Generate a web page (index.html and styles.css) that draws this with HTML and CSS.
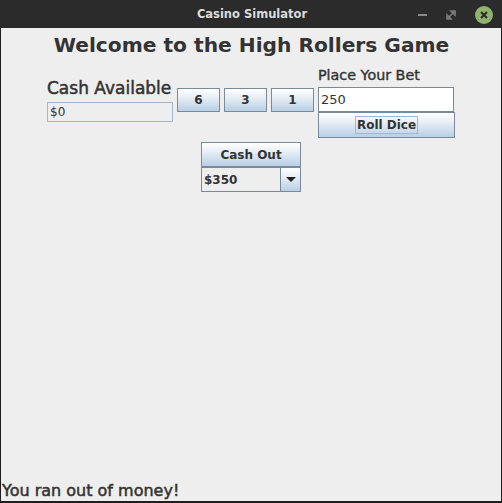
FILE: index.html
```html
<!DOCTYPE html>
<html>
<head>
<meta charset="utf-8">
<link rel="stylesheet" href="styles.css">
</head>
<body>
<div class="window">
  <div class="titlebar">
    <span class="title">Casino Simulator</span>
    <div class="controls">
      <span class="ctl min"></span>
      <svg class="ctl max" width="10" height="10" viewBox="0 0 10 10"><path d="M5 1h4v4z M1 5v4h4z M3 7l4-4" fill="#7a7a7a" stroke="#7a7a7a" stroke-width="1.6"/></svg>
      <svg class="ctl close" width="18" height="18" viewBox="0 0 18 18"><circle cx="9" cy="9" r="9" fill="#8fb26c"/><path d="M6 6l6 6M12 6l-6 6" stroke="#2a2a2a" stroke-width="2"/></svg>
    </div>
  </div>
  <div class="content">
    <h1 class="heading">Welcome to the High Rollers Game</h1>
    <div class="row">
      <div class="cash-col">
        <div class="label">Cash Available</div>
        <div class="field readonly">$0</div>
      </div>
      <div class="dice">
        <div class="btn die">6</div>
        <div class="btn die">3</div>
        <div class="btn die">1</div>
      </div>
      <div class="bet-col">
        <div class="label small">Place Your Bet</div>
        <div class="field input">250</div>
        <div class="btn roll"><span class="focus">Roll Dice</span></div>
      </div>
    </div>
    <div class="cashout">
      <div class="btn out">Cash Out</div>
      <div class="combo">
        <div class="combo-val">$350</div>
        <div class="combo-arrow"><svg width="10" height="6" viewBox="0 0 10 6"><path d="M0 0h10L5 5z" fill="#222"/></svg></div>
      </div>
    </div>
    <div class="spacer"></div>
    <div class="status">You ran out of money!</div>
  </div>
</div>
</body>
</html>
```

FILE: styles.css
```css
html, body {
  margin: 0;
  padding: 0;
  background: #1e1e1e;
}
.window {
  width: 502px;
  height: 503px;
  display: flex;
  flex-direction: column;
  font-family: "DejaVu Sans", sans-serif;
}
.titlebar {
  height: 28px;
  background: #2b2b2b;
  position: relative;
  display: flex;
  align-items: center;
  justify-content: center;
  flex: none;
}
.title {
  color: #dcdcdc;
  font-weight: bold;
  font-size: 11.5px;
  margin-left: 2px;
}
.controls {
  position: absolute;
  right: 9px;
  top: 6px;
  display: flex;
  align-items: center;
  gap: 19px;
}
.ctl.min {
  width: 9px;
  height: 2px;
  background: #8a8a8a;
}
.content {
  flex: 1;
  background: #eeeeee;
  margin: 0 1px 2px 1px;
  display: flex;
  flex-direction: column;
  color: #333333;
}
.heading {
  margin: 5px 0 0 0;
  font-size: 20.2px;
  line-height: 24px;
  font-weight: bold;
  text-align: center;
  color: #333333;
  padding-left: 1px;
}
.row {
  display: flex;
  align-items: flex-start;
  margin-top: 7px;
  padding-left: 46px;
  gap: 4px;
}
.cash-col {
  width: 126px;
  margin-top: 13px;
  display: flex;
  flex-direction: column;
}
.label {
  font-size: 17px;
  line-height: 22px;
  color: #333333;
  white-space: nowrap;
  -webkit-text-stroke: 0.5px #333333;
}
.label.small {
  font-size: 14.3px;
  -webkit-text-stroke: 0.4px #333333;
}
.field {
  box-sizing: border-box;
  font-size: 12px;
  padding-left: 2px;
  display: flex;
  align-items: center;
  color: #333333;
}
.readonly {
  margin-top: 3px;
  height: 20px;
  border: 1px solid #a3b8cc;
  background: #eeeeee;
}
.dice {
  display: flex;
  gap: 4px;
  margin-top: 24px;
}
.btn {
  box-sizing: border-box;
  border: 1px solid #7a8a99;
  background: linear-gradient(to bottom, #ffffff 0%, #eaf0f6 35%, #b8cfe5 100%);
  font-weight: bold;
  font-size: 12px;
  color: #333333;
  display: flex;
  align-items: center;
  justify-content: center;
}
.die {
  width: 43px;
  height: 24px;
}
.bet-col {
  width: 137px;
  display: flex;
  flex-direction: column;
}
.input {
  margin-top: 1px;
  height: 25px;
  width: 136px;
  background: #ffffff;
  border: 1px solid #7a8a99;
  font-size: 13px;
}
.roll {
  height: 26px;
}
.focus {
  border: 1px solid #a3b8cc;
  padding: 0 1px;
  line-height: 16px;
}
.cashout {
  align-self: center;
  width: 100px;
  margin-top: 4px;
  display: flex;
  flex-direction: column;
}
.out {
  height: 25px;
}
.combo {
  box-sizing: border-box;
  height: 25px;
  border: 1px solid #7a8a99;
  display: flex;
}
.combo-val {
  flex: 1;
  background: #eeeeee;
  font-weight: bold;
  font-size: 12px;
  display: flex;
  align-items: center;
  padding-left: 2px;
  color: #333333;
  border-right: 1px solid #7a8a99;
}
.combo-arrow {
  width: 19px;
  background: linear-gradient(to bottom, #ffffff 0%, #eaf0f6 35%, #b8cfe5 100%);
  display: flex;
  align-items: center;
  justify-content: center;
}
.spacer {
  flex: 1;
}
.status {
  font-size: 16px;
  line-height: 20px;
  padding-left: 1px;
  color: #333333;
  -webkit-text-stroke: 0.5px #333333;
}
```
